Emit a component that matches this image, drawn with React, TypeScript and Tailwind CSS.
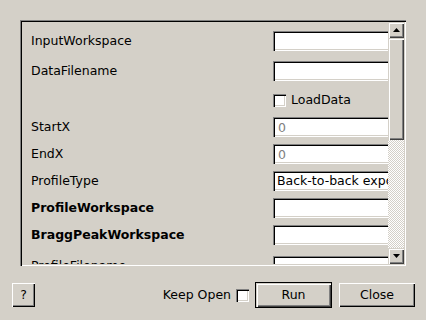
import React from 'react';

// Classic 3D bevels, written out in full so Tailwind picks them up.
const sunken =
  'shadow-[inset_1px_1px_#808080,inset_2px_2px_#000,inset_-1px_-1px_#fff,inset_-2px_-2px_#d4d0c8]';
const raised =
  'shadow-[inset_1px_1px_#d4d0c8,inset_2px_2px_#fff,inset_-1px_-1px_#404040,inset_-2px_-2px_#808080]';
const button =
  'shadow-[inset_1px_1px_#fff,inset_-1px_-1px_#000,inset_-2px_-2px_#808080]';

type Row =
  | { kind: 'text'; label: string; bold?: boolean; value?: string; disabled?: boolean; gap: string }
  | { kind: 'check'; label: string; gap: string }
  | { kind: 'combo'; label: string; value: string; gap: string };

const rows: Row[] = [
  { kind: 'text', label: 'InputWorkspace', gap: 'mt-0' },
  { kind: 'text', label: 'DataFilename', gap: 'mt-[10px]' },
  { kind: 'check', label: 'LoadData', gap: 'mt-[9px]' },
  { kind: 'text', label: 'StartX', value: '0', disabled: true, gap: 'mt-[7px]' },
  { kind: 'text', label: 'EndX', value: '0', disabled: true, gap: 'mt-[7px]' },
  { kind: 'combo', label: 'ProfileType', value: 'Back-to-back exponential', gap: 'mt-[7px]' },
  { kind: 'text', label: 'ProfileWorkspace', bold: true, gap: 'mt-[7px]' },
  { kind: 'text', label: 'BraggPeakWorkspace', bold: true, gap: 'mt-[7px]' },
  { kind: 'text', label: 'ProfileFilename', gap: 'mt-[11px]' },
];

function CheckBox() {
  return <span className={`block h-[13px] w-[13px] shrink-0 bg-white ${sunken}`} />;
}

function Arrow({ up }: { up?: boolean }) {
  return (
    <svg width="7" height="4" viewBox="0 0 7 4" className="block">
      <path d={up ? 'M3.5 0L7 4H0z' : 'M0 0h7L3.5 4z'} fill="#000" />
    </svg>
  );
}

function PropertyRow({ row }: { row: Row }) {
  const label = (
    <span
      className={`w-[242px] shrink-0 whitespace-nowrap pt-[1px] ${'bold' in row && row.bold ? 'font-bold' : ''}`}
    >
      {row.kind === 'check' ? '' : row.label}
    </span>
  );

  if (row.kind === 'check') {
    return (
      <div className={`flex h-[20px] items-center ${row.gap}`}>
        {label}
        <CheckBox />
        <span className="ml-[5px] pt-[1px]">{row.label}</span>
      </div>
    );
  }

  if (row.kind === 'combo') {
    return (
      <div className={`flex h-[20px] items-center ${row.gap}`}>
        {label}
        <div
          className={`flex h-[20px] w-[160px] shrink-0 items-center overflow-hidden whitespace-nowrap bg-white pl-[4px] pt-[1px] ${sunken}`}
        >
          {row.value}
        </div>
      </div>
    );
  }

  return (
    <div className={`flex h-[20px] items-center ${row.gap}`}>
      {label}
      <input
        readOnly
        defaultValue={row.value ?? ''}
        className={`h-[20px] w-[160px] shrink-0 bg-white pl-[5px] pt-[1px] outline-none ${sunken} ${
          row.disabled ? 'text-[#808080]' : 'text-black'
        }`}
      />
    </div>
  );
}

export default function App() {
  return (
    <div className="flex h-[320px] w-[426px] flex-col bg-[#d4d0c8] font-['DejaVu_Sans',sans-serif] text-[12.5px] text-black">
      <div className={`ml-[20px] mt-[20px] flex h-[246px] w-[386px] p-[2px] ${sunken}`}>
        <div className="min-w-0 flex-1 overflow-hidden pl-[9px] pt-[9px]">
          {rows.map((row) => (
            <PropertyRow key={row.label} row={row} />
          ))}
        </div>

        <div className="flex w-[16px] shrink-0 flex-col">
          <div className={`flex h-[16px] items-center justify-center bg-[#d4d0c8] ${raised}`}>
            <Arrow up />
          </div>
          <div className={`h-[102px] bg-[#d4d0c8] ${raised}`} />
          <div className="flex-1 bg-[repeating-conic-gradient(#fff_0_25%,#d4d0c8_0_50%)] bg-[length:2px_2px]" />
          <div className={`flex h-[16px] items-center justify-center bg-[#d4d0c8] ${raised}`}>
            <Arrow />
          </div>
        </div>
      </div>

      <div className="mt-[16px] flex h-[26px] items-center pr-[11px]">
        <button className={`ml-[12px] h-[24px] w-[23px] pt-[1px] ${button}`}>?</button>
        <div className="flex-1" />
        <span className="pt-[1px]">Keep Open</span>
        <span className="ml-[5px]">
          <CheckBox />
        </span>
        <button className="ml-[6px] h-[26px] w-[77px] border border-black">
          <span className={`flex h-full w-full items-center justify-center pt-[1px] ${raised}`}>Run</span>
        </button>
        <button className={`ml-[7px] h-[24px] w-[76px] pt-[1px] ${button}`}>Close</button>
      </div>
    </div>
  );
}
